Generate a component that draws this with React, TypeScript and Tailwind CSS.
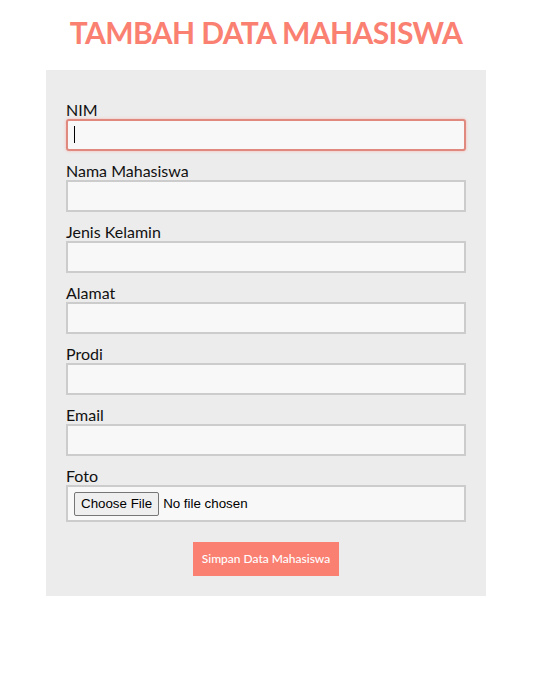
import React from 'react';

const fields = ['Nama Mahasiswa', 'Jenis Kelamin', 'Alamat', 'Prodi', 'Email'];

export default function App() {
  return (
    <div className="min-h-[680px] bg-white pt-[13px]" style={{ fontFamily: 'Lato, "Open Sans", sans-serif' }}>
      <div className="w-[532px]">
        <h1 className="text-center text-[30px] font-bold leading-[38px] tracking-[-0.6px] text-[#fa8072]">TAMBAH DATA MAHASISWA</h1>

        <form className="mx-[46px] mt-[19px] w-[440px] bg-[#ececec] px-5 pb-5 pt-[30px]">
          {/* NIM - focused */}
          <label className="block text-[16px] leading-[19px] text-[#111]">NIM</label>
          <div className="relative">
            <input
              type="text"
              className="block h-8 w-[400px] rounded-[3px] border-2 border-[#e0897f] bg-[#f8f8f8] px-2 shadow-[0_0_3px_#f5b5ad] outline-none"
            />
            <span className="absolute left-[8px] top-[7px] h-[17px] w-px bg-black" />
          </div>

          {fields.map((f) => (
            <div key={f} className="mt-[10px]">
              <label className="block text-[16px] leading-[19px] text-[#111]">{f}</label>
              <input
                type="text"
                className="block h-8 w-[400px] border-2 border-[#cccccc] bg-[#f8f8f8] px-2 outline-none"
              />
            </div>
          ))}

          <div className="mt-[10px]">
            <label className="block text-[16px] leading-[19px] text-[#111]">Foto</label>
            <div className="h-[37px] w-[400px] border-2 border-[#cccccc] bg-[#f8f8f8] px-[6px] pt-[3px]">
              <input
                type="file"
                className="text-[13.33px] text-black file:mr-1 file:rounded-[2px] file:border file:border-[#767676] file:bg-[#efefef] file:px-[6px] file:py-[1px] file:text-[13.33px]"
                style={{ fontFamily: '"Liberation Sans", Arial, sans-serif' }}
              />
            </div>
          </div>

          <div className="mt-5 flex justify-center">
            <button type="button" className="h-[34px] w-[146px] bg-[#fa8072] text-[12px] font-medium text-white">
              Simpan Data Mahasiswa
            </button>
          </div>
        </form>
      </div>
    </div>
  );
}
